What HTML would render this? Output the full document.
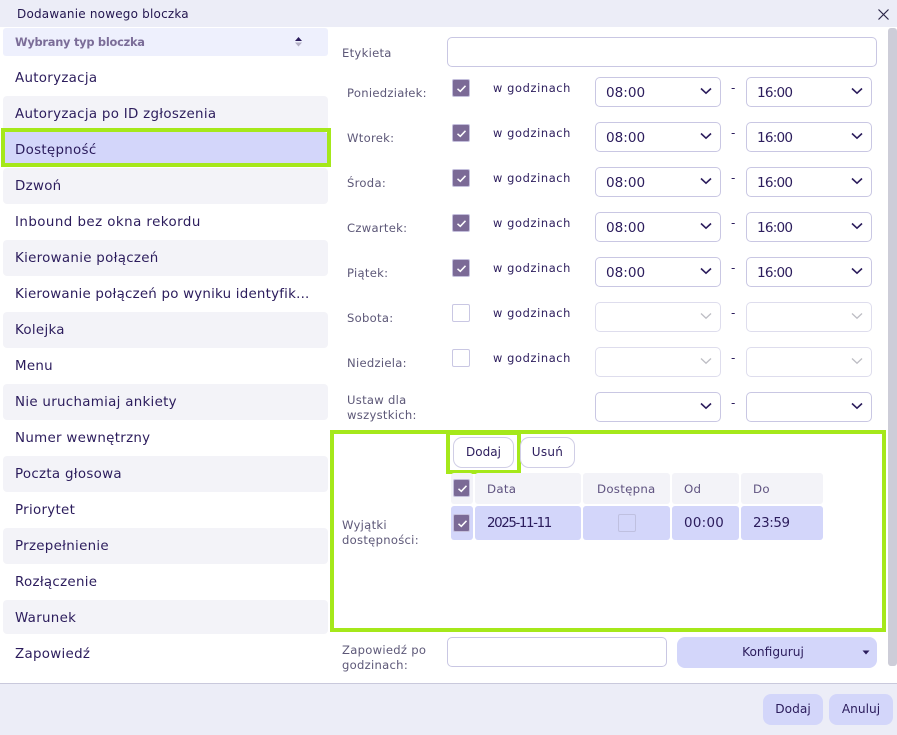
<!DOCTYPE html>
<html lang="pl"><head><meta charset="utf-8"><title>Dodawanie nowego bloczka</title>
<style>
*{box-sizing:border-box}
html,body{margin:0;padding:0;width:897px;height:735px;overflow:hidden;background:#fff}
body{position:relative;font-family:"DejaVu Sans","Liberation Sans",sans-serif;color:#2b1c5c}
.a{position:absolute;white-space:nowrap}
.it{position:absolute;left:3px;width:325px;height:36px;line-height:37px;padding-left:12px;font-size:13.4px;letter-spacing:.3px;border-radius:4px;color:#2b1c5c}
.g{background:#f3f3f8}
.l{position:absolute;margin-top:1px;font-size:11.6px;letter-spacing:.28px;color:#5d5878;line-height:15px;white-space:nowrap}
.cb{position:absolute;width:18px;height:18px;border:1px solid #c9c7e3;border-radius:2px;background:#fff}
.cb.on{background:#7b6a96;border-color:#c4bfdc}
.cb svg{position:absolute;left:3px;top:3px}
.wg{position:absolute;left:493px;font-size:11.4px;letter-spacing:.62px;color:#2b1c5c;line-height:14px;white-space:nowrap}
.s{position:absolute;width:126px;height:30px;border:1px solid #c9c7e3;border-radius:5px;background:#fff;font-size:13.6px;line-height:30px;padding-left:10px;color:#2b1c5c}
.s svg{position:absolute;right:8px;top:9px}
.s.d{border-color:#dedded}
.s i{font-style:normal;letter-spacing:-.8px}
.dash{position:absolute;left:731px;font-size:12px;line-height:14px;color:#2b1c5c}
.inp{position:absolute;height:30px;border:1px solid #c9c7e3;border-radius:5px;background:#fff}
.btn{position:absolute;border:1px solid #d0cee6;border-radius:9px;background:#fff;font-size:12px;text-align:center;color:#2b1c5c}
.pb{position:absolute;background:#d3d6fa;border-radius:8px;font-size:12.2px;text-align:center;color:#2b1c5c}
.th{position:absolute;top:473px;height:31px;background:#f3f3f8;border-radius:3px;font-size:11.8px;line-height:32px;letter-spacing:.25px;color:#5f5380}
.td{position:absolute;top:506px;height:34px;background:#d3d6fa;border-radius:3px;font-size:13.4px;line-height:36px;color:#2b1c5c}
.gb{position:absolute;border:4px solid #a5e81a}
</style></head><body>
<div class="a" style="left:0;top:0;width:897px;height:27px;background:#ecedf7"></div>
<div class="a" style="left:17px;top:6px;font-size:12px;line-height:16px;letter-spacing:.2px;color:#23164f">Dodawanie nowego bloczka</div>
<svg class="a" style="left:877px;top:8px" width="13" height="13" viewBox="0 0 13 13"><path d="M1.5 1.5L11.5 11.5M11.5 1.5L1.5 11.5" stroke="#2b2648" stroke-width="1.2" fill="none"/></svg>

<div class="a" style="left:3px;top:28px;width:325px;height:28px;background:#eef0fd;border-radius:3px"></div>
<div class="a" style="left:15px;top:34px;font-size:11.4px;line-height:16px;font-weight:bold;letter-spacing:-.25px;color:#7b6d98">Wybrany typ bloczka</div>
<svg class="a" style="left:294px;top:37px" width="9" height="10" viewBox="0 0 9 10"><path d="M4.5 0L8 4H1Z" fill="#2b1c5c"/><path d="M1 5.5H8L4.5 9.5Z" fill="#b3afc4"/></svg>

<div class="it" style="top:60px">Autoryzacja</div>
<div class="it g" style="top:96px">Autoryzacja po ID zgłoszenia</div>
<div class="it" style="top:132px;background:#d3d6fa;height:32px;line-height:37px">Dostępność</div>
<div class="gb" style="left:1px;top:128px;width:330px;height:39px"></div>
<div class="it g" style="top:168px">Dzwoń</div>
<div class="it" style="top:204px;letter-spacing:.45px">Inbound bez okna rekordu</div>
<div class="it g" style="top:240px">Kierowanie połączeń</div>
<div class="it" style="top:276px;overflow:hidden;width:325px;letter-spacing:.22px">Kierowanie połączeń po wyniku identyfik...</div>
<div class="it g" style="top:312px">Kolejka</div>
<div class="it" style="top:348px">Menu</div>
<div class="it g" style="top:384px">Nie uruchamiaj ankiety</div>
<div class="it" style="top:420px">Numer wewnętrzny</div>
<div class="it g" style="top:456px">Poczta głosowa</div>
<div class="it" style="top:492px">Priorytet</div>
<div class="it g" style="top:528px">Przepełnienie</div>
<div class="it" style="top:564px">Rozłączenie</div>
<div class="it g" style="top:600px;height:34px">Warunek</div>
<div class="it" style="top:636px">Zapowiedź</div>

<div class="l" style="left:342px;top:45px">Etykieta</div>
<div class="inp" style="left:447px;top:37px;width:430px"></div>

<div class="l" style="left:347px;top:85px">Poniedziałek:</div>
<div class="cb on" style="left:452px;top:79px"><svg width="11" height="11" viewBox="0 0 11 11"><path d="M1.5 5.8L4.3 8.3L9.5 2.8" stroke="#fff" stroke-width="1.5" fill="none"/></svg></div>
<div class="wg" style="top:81px">w godzinach</div>
<div class="s" style="left:595px;top:77px">08:00<svg width="12" height="8" viewBox="0 0 12 8"><path d="M1 1.5L6 6.2L11 1.5" stroke="#2b1c5c" stroke-width="1.6" fill="none"/></svg></div>
<div class="dash" style="top:81px">-</div>
<div class="s" style="left:746px;top:77px"><i>16:00</i><svg width="12" height="8" viewBox="0 0 12 8"><path d="M1 1.5L6 6.2L11 1.5" stroke="#2b1c5c" stroke-width="1.6" fill="none"/></svg></div>

<div class="l" style="left:347px;top:130px">Wtorek:</div>
<div class="cb on" style="left:452px;top:124px"><svg width="11" height="11" viewBox="0 0 11 11"><path d="M1.5 5.8L4.3 8.3L9.5 2.8" stroke="#fff" stroke-width="1.5" fill="none"/></svg></div>
<div class="wg" style="top:126px">w godzinach</div>
<div class="s" style="left:595px;top:122px">08:00<svg width="12" height="8" viewBox="0 0 12 8"><path d="M1 1.5L6 6.2L11 1.5" stroke="#2b1c5c" stroke-width="1.6" fill="none"/></svg></div>
<div class="dash" style="top:126px">-</div>
<div class="s" style="left:746px;top:122px"><i>16:00</i><svg width="12" height="8" viewBox="0 0 12 8"><path d="M1 1.5L6 6.2L11 1.5" stroke="#2b1c5c" stroke-width="1.6" fill="none"/></svg></div>

<div class="l" style="left:347px;top:175px">Środa:</div>
<div class="cb on" style="left:452px;top:169px"><svg width="11" height="11" viewBox="0 0 11 11"><path d="M1.5 5.8L4.3 8.3L9.5 2.8" stroke="#fff" stroke-width="1.5" fill="none"/></svg></div>
<div class="wg" style="top:171px">w godzinach</div>
<div class="s" style="left:595px;top:167px">08:00<svg width="12" height="8" viewBox="0 0 12 8"><path d="M1 1.5L6 6.2L11 1.5" stroke="#2b1c5c" stroke-width="1.6" fill="none"/></svg></div>
<div class="dash" style="top:171px">-</div>
<div class="s" style="left:746px;top:167px"><i>16:00</i><svg width="12" height="8" viewBox="0 0 12 8"><path d="M1 1.5L6 6.2L11 1.5" stroke="#2b1c5c" stroke-width="1.6" fill="none"/></svg></div>

<div class="l" style="left:347px;top:220px">Czwartek:</div>
<div class="cb on" style="left:452px;top:214px"><svg width="11" height="11" viewBox="0 0 11 11"><path d="M1.5 5.8L4.3 8.3L9.5 2.8" stroke="#fff" stroke-width="1.5" fill="none"/></svg></div>
<div class="wg" style="top:216px">w godzinach</div>
<div class="s" style="left:595px;top:212px">08:00<svg width="12" height="8" viewBox="0 0 12 8"><path d="M1 1.5L6 6.2L11 1.5" stroke="#2b1c5c" stroke-width="1.6" fill="none"/></svg></div>
<div class="dash" style="top:216px">-</div>
<div class="s" style="left:746px;top:212px"><i>16:00</i><svg width="12" height="8" viewBox="0 0 12 8"><path d="M1 1.5L6 6.2L11 1.5" stroke="#2b1c5c" stroke-width="1.6" fill="none"/></svg></div>

<div class="l" style="left:347px;top:265px">Piątek:</div>
<div class="cb on" style="left:452px;top:259px"><svg width="11" height="11" viewBox="0 0 11 11"><path d="M1.5 5.8L4.3 8.3L9.5 2.8" stroke="#fff" stroke-width="1.5" fill="none"/></svg></div>
<div class="wg" style="top:261px">w godzinach</div>
<div class="s" style="left:595px;top:257px">08:00<svg width="12" height="8" viewBox="0 0 12 8"><path d="M1 1.5L6 6.2L11 1.5" stroke="#2b1c5c" stroke-width="1.6" fill="none"/></svg></div>
<div class="dash" style="top:261px">-</div>
<div class="s" style="left:746px;top:257px"><i>16:00</i><svg width="12" height="8" viewBox="0 0 12 8"><path d="M1 1.5L6 6.2L11 1.5" stroke="#2b1c5c" stroke-width="1.6" fill="none"/></svg></div>

<div class="l" style="left:347px;top:310px">Sobota:</div>
<div class="cb" style="left:452px;top:304px"></div>
<div class="wg" style="top:306px">w godzinach</div>
<div class="s d" style="left:595px;top:302px"><svg width="12" height="8" viewBox="0 0 12 8"><path d="M1 1.5L6 6.2L11 1.5" stroke="#bdbdc4" stroke-width="1.3" fill="none"/></svg></div>
<div class="dash" style="top:306px">-</div>
<div class="s d" style="left:746px;top:302px"><svg width="12" height="8" viewBox="0 0 12 8"><path d="M1 1.5L6 6.2L11 1.5" stroke="#bdbdc4" stroke-width="1.3" fill="none"/></svg></div>

<div class="l" style="left:347px;top:355px">Niedziela:</div>
<div class="cb" style="left:452px;top:349px"></div>
<div class="wg" style="top:351px">w godzinach</div>
<div class="s d" style="left:595px;top:347px"><svg width="12" height="8" viewBox="0 0 12 8"><path d="M1 1.5L6 6.2L11 1.5" stroke="#bdbdc4" stroke-width="1.3" fill="none"/></svg></div>
<div class="dash" style="top:351px">-</div>
<div class="s d" style="left:746px;top:347px"><svg width="12" height="8" viewBox="0 0 12 8"><path d="M1 1.5L6 6.2L11 1.5" stroke="#bdbdc4" stroke-width="1.3" fill="none"/></svg></div>

<div class="l" style="left:347px;top:392px">Ustaw dla<br>wszystkich:</div>
<div class="s" style="left:595px;top:392px"><svg width="12" height="8" viewBox="0 0 12 8"><path d="M1 1.5L6 6.2L11 1.5" stroke="#2b1c5c" stroke-width="1.6" fill="none"/></svg></div>
<div class="dash" style="top:396px">-</div>
<div class="s" style="left:746px;top:392px"><svg width="12" height="8" viewBox="0 0 12 8"><path d="M1 1.5L6 6.2L11 1.5" stroke="#2b1c5c" stroke-width="1.6" fill="none"/></svg></div>

<div class="gb" style="left:330px;top:430px;width:556px;height:202px"></div>
<div class="btn" style="left:453px;top:437px;width:61px;height:31px;line-height:29px">Dodaj</div>
<div class="gb" style="left:446px;top:431px;width:75px;height:43px"></div>
<div class="btn" style="left:520px;top:437px;width:55px;height:31px;line-height:29px;letter-spacing:.3px">Usuń</div>

<div class="l" style="left:342px;top:517px">Wyjątki<br>dostępności:</div>

<div class="a" style="left:451px;top:473px;width:22px;height:31px;background:#f3f3f8;border-radius:3px"></div>
<div class="cb on" style="left:453px;top:479px;width:17px;height:18px"><svg width="11" height="11" viewBox="0 0 11 11"><path d="M1.5 5.8L4.3 8.3L9.5 2.8" stroke="#fff" stroke-width="1.5" fill="none"/></svg></div>
<div class="th" style="left:475px;width:106px;padding-left:12px">Data</div>
<div class="th" style="left:583px;width:87px;padding-left:14px">Dostępna</div>
<div class="th" style="left:672px;width:67px;padding-left:12px">Od</div>
<div class="th" style="left:741px;width:82px;padding-left:12px">Do</div>

<div class="a" style="left:451px;top:506px;width:22px;height:34px;background:#d3d6fa;border-radius:3px"></div>
<div class="cb on" style="left:453px;top:514px;width:17px;height:18px"><svg width="11" height="11" viewBox="0 0 11 11"><path d="M1.5 5.8L4.3 8.3L9.5 2.8" stroke="#fff" stroke-width="1.5" fill="none"/></svg></div>
<div class="td" style="left:475px;width:106px;padding-left:12px;letter-spacing:-1.4px">2025-11-11</div>
<div class="td" style="left:583px;width:87px"></div>
<div class="cb" style="left:618px;top:514px;background:#d3d6fa;border-color:#bfc0e0"></div>
<div class="td" style="left:672px;width:67px;padding-left:12px;letter-spacing:.3px">00:00</div>
<div class="td" style="left:741px;width:82px;padding-left:12px;letter-spacing:-.4px">23:59</div>

<div class="l" style="left:342px;top:642px">Zapowiedź po<br>godzinach:</div>
<div class="inp" style="left:447px;top:637px;width:220px"></div>
<div class="pb" style="left:677px;top:637px;width:200px;height:31px;line-height:31px;padding-right:8px">Konfiguruj</div>
<svg class="a" style="left:862px;top:650px" width="8" height="5" viewBox="0 0 8 5"><path d="M0.5 0.5H7.5L4 4.5Z" fill="#2b1c5c"/></svg>

<div class="a" style="left:888px;top:28px;width:9px;height:638px;background:#cdcdd8;border-radius:3px"></div>

<div class="a" style="left:0;top:683px;width:897px;height:52px;background:#ecedf7;border-top:1px solid #c9c9dc"></div>
<div class="pb" style="left:763px;top:694px;width:60px;height:31px;line-height:31px">Dodaj</div>
<div class="pb" style="left:829px;top:694px;width:64px;height:31px;line-height:31px">Anuluj</div>
</body></html>
